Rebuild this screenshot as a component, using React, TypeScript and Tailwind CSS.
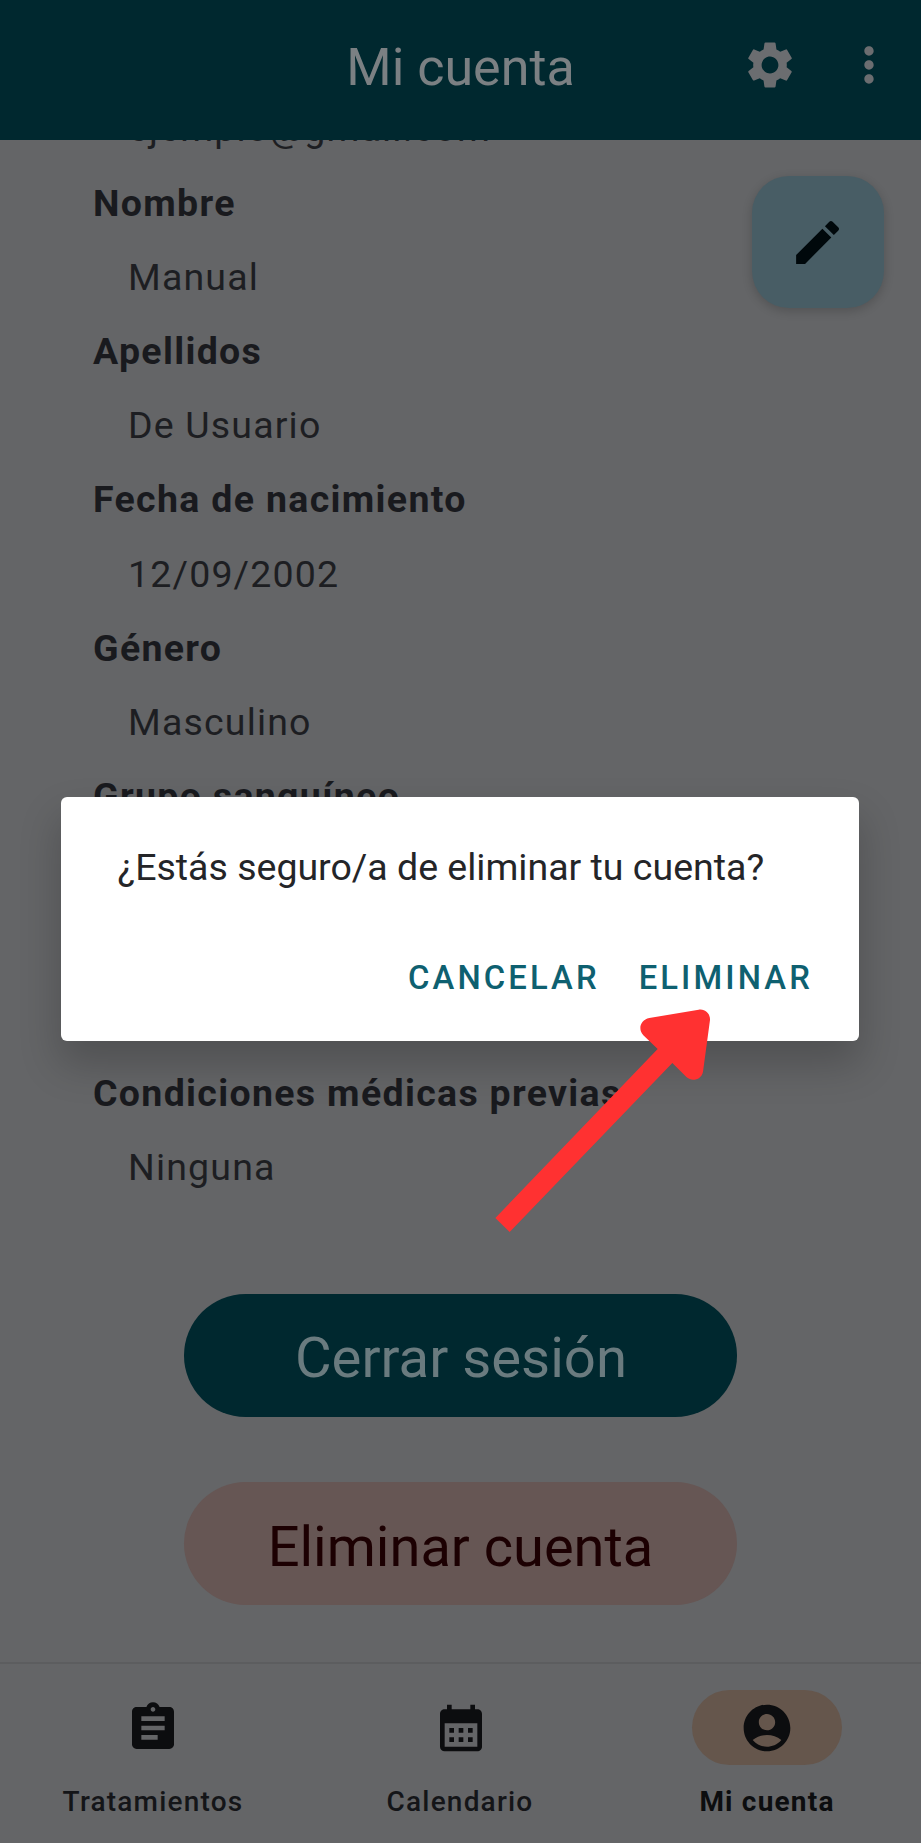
import { MdSettings, MdMoreVert, MdEdit, MdAssignment, MdCalendarMonth, MdAccountCircle } from "react-icons/md";

type Row = { text: string; kind: "label" | "value" };

const topRows: Row[] = [
  { text: "ejemplo@gmail.com", kind: "value" },
  { text: "Nombre", kind: "label" },
  { text: "Manual", kind: "value" },
  { text: "Apellidos", kind: "label" },
  { text: "De Usuario", kind: "value" },
  { text: "Fecha de nacimiento", kind: "label" },
  { text: "12/09/2002", kind: "value" },
  { text: "Género", kind: "label" },
  { text: "Masculino", kind: "value" },
  { text: "Grupo sanguíneo", kind: "label" },
];

const bottomRows: Row[] = [
  { text: "Condiciones médicas previas", kind: "label" },
  { text: "Ninguna", kind: "value" },
];

function ProfileRow({ text, kind }: Row) {
  return (
    <div
      className={
        kind === "label"
          ? "h-[74.2px] pl-[93px] text-[37.5px] leading-[74.2px] font-bold tracking-[1.32px] text-[#191a1e]"
          : "h-[74.2px] pl-[128px] text-[37.5px] leading-[74.2px] tracking-[1.17px] text-[#1d1e22]"
      }
    >
      {text}
    </div>
  );
}

function Header() {
  return (
    <header className="relative z-10 grid h-[139.5px] shrink-0 grid-cols-[1fr_auto_1fr] items-center bg-[#00282f] pb-[4px]">
      <div />
      <h1 className="pt-[1px] text-[52px] leading-none text-[#7b8083]">Mi cuenta</h1>
      <div className="flex items-center justify-end gap-[43px] pr-[24px] pb-[5px] text-[#6b6d70]">
        <MdSettings size={56} />
        <MdMoreVert size={56} />
      </div>
    </header>
  );
}

function BottomNav() {
  return (
    <nav className="grid h-[181px] shrink-0 grid-cols-3 border-t-2 border-[#5c5d5f] text-center text-[28px] leading-none text-[#0c0d0f]">
      <div className="flex flex-col items-center pt-[26px] pr-[1px]">
        <div className="flex h-[75px] w-[150px] items-center justify-center">
          <MdAssignment size={56} />
        </div>
        <span className="mt-[23px] font-medium tracking-[1.2px] text-[#141518]">Tratamientos</span>
      </div>
      <div className="flex flex-col items-center pt-[26px]">
        <div className="flex h-[75px] w-[150px] items-center justify-center">
          <MdCalendarMonth size={56} />
        </div>
        <span className="mt-[23px] pr-[1px] font-medium tracking-[1.2px] text-[#141518]">Calendario</span>
      </div>
      <div className="flex flex-col items-center pt-[26px] pr-[1px]">
        <div className="flex h-[75px] w-[150px] items-center justify-center rounded-full bg-[#65564c]">
          <MdAccountCircle size={56} />
        </div>
        <span className="mt-[23px] font-bold tracking-[1.2px]">Mi cuenta</span>
      </div>
    </nav>
  );
}

function Dialog() {
  return (
    <div className="absolute top-[797px] left-[61.4px] flex h-[244px] w-[798px] flex-col justify-between rounded-[6px] bg-white px-[56px] pt-[48px] pb-[44px] shadow-[0_22px_40px_2px_rgba(0,0,0,0.2)]">
      <p className="text-[37.5px] leading-[44px] whitespace-nowrap text-[#242528]">¿Estás seguro/a de eliminar tu cuenta?</p>
      <div className="-mr-[9.5px] flex justify-end gap-[39px] text-[32.8px] leading-[38px] font-medium tracking-[3.1px] text-[#0e6070]">
        <button>CANCELAR</button>
        <button>ELIMINAR</button>
      </div>
    </div>
  );
}

export default function App() {
  return (
    <div className="relative flex h-[1843px] w-[921px] flex-col overflow-hidden bg-[#646567] font-[Roboto,sans-serif]">
      <Header />
      <main className="flex-1 overflow-hidden">
        <div className="-mt-[48.1px]">
          {topRows.map((row) => (
            <ProfileRow key={row.text} {...row} />
          ))}
          <div className="h-[222.6px]" />
          {bottomRows.map((row) => (
            <ProfileRow key={row.text} {...row} />
          ))}
        </div>
        <div className="mx-auto mt-[89.3px] flex w-[553px] flex-col gap-[65.5px] text-[56px] leading-none">
          <button className="h-[123px] rounded-full bg-[#00282f] pt-[6px] pl-[1px] text-[56.3px] text-[#6a7b7f]">Cerrar sesión</button>
          <button className="h-[123px] rounded-full bg-[#665654] pt-[6px] text-[#1c0002]">Eliminar cuenta</button>
        </div>
      </main>
      <BottomNav />
      <button className="absolute top-[176.3px] left-[752px] flex h-[132px] w-[132px] items-center justify-center rounded-[37px] bg-[#485d65] pr-[1px] text-[#00080b] shadow-[0_3px_10px_1px_rgba(0,0,0,0.16)]">
        <MdEdit size={57} />
      </button>
      <Dialog />
      <svg className="absolute top-[990px] left-[480px]" width="250" height="260" viewBox="0 0 750 780" fill="#ff3131">
        <path d="M46 684 L533 177 L490 136 C473 118 481 89 508 84 L656 59 C676 56 691 71 690 90 L669 245 C665 268 637 277 620 262 L577 219 L89 726 Z" />
      </svg>
    </div>
  );
}
